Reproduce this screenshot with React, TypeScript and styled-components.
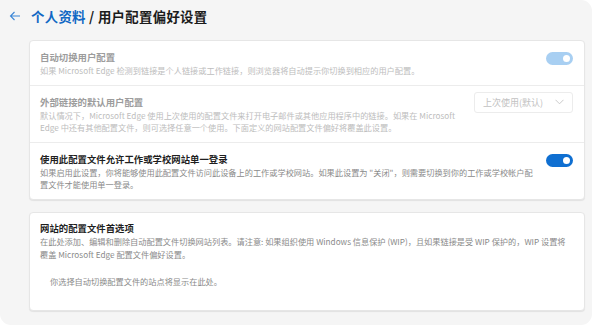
import React from 'react'
import styled, { createGlobalStyle } from 'styled-components'

const GlobalStyle = createGlobalStyle`
  html, body {
    margin: 0;
    padding: 0;
    background: #ffffff;
  }
  body {
    font-family: "Noto Sans CJK SC", "Noto Sans", "Liberation Sans", sans-serif;
    -webkit-font-smoothing: antialiased;
  }
`

const Panel = styled.div`
  width: 592px;
  height: 325px;
  box-sizing: border-box;
  background: #f5f5f5;
  border-radius: 0 11px 11px 11px;
  display: flex;
  flex-direction: column;
  padding: 0 7px 0 29px;
`

const Header = styled.div`
  height: 40px;
  display: flex;
  align-items: center;
  gap: 10px;
  margin-left: -20px;
  padding-bottom: 8px;
  box-sizing: border-box;
`

const BackButton = styled.span`
  display: flex;
  align-items: center;
  color: #3b86d6;
`

const Title = styled.h1`
  margin: 0;
  font-size: 13.4px;
  font-weight: 700;
  color: #1b1b1b;
  letter-spacing: 0.3px;
`

const Crumb = styled.span`
  color: #1168c4;
`

const Card = styled.section<{ $gap?: number }>`
  background: #ffffff;
  border: 1px solid #e6e6e6;
  border-radius: 4px;
  box-shadow: 0 1px 1px rgba(0, 0, 0, 0.08);
  margin-bottom: ${({ $gap }) => $gap ?? 0}px;
`

const Row = styled.div<{ $last?: boolean }>`
  display: flex;
  align-items: flex-start;
  justify-content: space-between;
  padding: 9px 11px 8px 10px;
  border-bottom: ${({ $last }) => ($last ? 'none' : '1px solid #ececec')};
`

const TextBlock = styled.div<{ $width: number }>`
  width: ${({ $width }) => $width}px;
`

const RowTitle = styled.div<{ $disabled?: boolean }>`
  font-size: 9.4px;
  line-height: 14px;
  font-weight: 700;
  color: ${({ $disabled }) => ($disabled ? '#9c9c9c' : '#1f1f1f')};
`

const RowDesc = styled.div<{ $disabled?: boolean }>`
  font-size: 8.2px;
  line-height: 12.6px;
  color: ${({ $disabled }) => ($disabled ? '#bdbdbd' : '#8a8a8a')};
`

const Toggle = styled.div<{ $disabled?: boolean }>`
  width: 27px;
  height: 13px;
  margin-top: 2px;
  border-radius: 7px;
  background: ${({ $disabled }) => ($disabled ? '#a8cff2' : '#0f6fd1')};
  display: flex;
  align-items: center;
  justify-content: flex-end;
  padding-right: 3px;
  box-sizing: border-box;
  &::after {
    content: '';
    width: 7px;
    height: 7px;
    border-radius: 50%;
    background: #ffffff;
  }
`

const Select = styled.div`
  width: 99px;
  height: 21px;
  margin-top: -3px;
  box-sizing: border-box;
  border: 1px solid #ececec;
  border-radius: 3px;
  display: flex;
  align-items: center;
  justify-content: space-between;
  padding: 0 8px 0 8px;
  font-size: 9px;
  color: #c2c2c2;
`

const CardBody = styled.div`
  padding: 8px 11px 0 10px;
  height: 97px;
  box-sizing: border-box;
`

const EmptyNote = styled.div`
  font-size: 8.2px;
  line-height: 13px;
  color: #8a8a8a;
  padding: 15px 0 0 10px;
`

const App = () => {
  return (
    <>
      <GlobalStyle />
      <Panel>
        <Header>
          <BackButton>
            <svg width="12" height="10" viewBox="0 0 12 10" fill="none">
              <path d="M11 5H1.5M5.5 1L1.5 5l4 4" stroke="currentColor" strokeWidth="1.1" />
            </svg>
          </BackButton>
          <Title>
            <Crumb>个人资料</Crumb> / 用户配置偏好设置
          </Title>
        </Header>

        <Card $gap={12}>
          <Row>
            <TextBlock $width={500}>
              <RowTitle $disabled>自动切换用户配置</RowTitle>
              <RowDesc $disabled>
                如果 Microsoft Edge 检测到链接是个人链接或工作链接，则浏览器将自动提示你切换到相应的用户配置。
              </RowDesc>
            </TextBlock>
            <Toggle $disabled />
          </Row>
          <Row>
            <TextBlock $width={425}>
              <RowTitle $disabled>外部链接的默认用户配置</RowTitle>
              <RowDesc $disabled>
                默认情况下，Microsoft Edge 使用上次使用的配置文件来打开电子邮件或其他应用程序中的链接。如果在 Microsoft
                Edge 中还有其他配置文件，则可选择任意一个使用。下面定义的网站配置文件偏好将覆盖此设置。
              </RowDesc>
            </TextBlock>
            <Select>
              上次使用(默认)
              <svg width="9" height="6" viewBox="0 0 9 6" fill="none">
                <path d="M0.5 0.8L4.5 4.8L8.5 0.8" stroke="#c4c4c4" strokeWidth="0.9" />
              </svg>
            </Select>
          </Row>
          <Row $last>
            <TextBlock $width={500}>
              <RowTitle>使用此配置文件允许工作或学校网站单一登录</RowTitle>
              <RowDesc>
                如果启用此设置，你将能够使用此配置文件访问此设备上的工作或学校网站。如果此设置为 "关闭"，则需要切换到你的工作或学校帐户配置文件才能使用单一登录。
              </RowDesc>
            </TextBlock>
            <Toggle />
          </Row>
        </Card>

        <Card>
          <CardBody>
            <RowTitle>网站的配置文件首选项</RowTitle>
            <TextBlock $width={531}>
              <RowDesc>
                在此处添加、编辑和删除自动配置文件切换网站列表。请注意: 如果组织使用 Windows 信息保护 (WIP)，且如果链接是受 WIP 保护的，WIP 设置将覆盖 Microsoft Edge 配置文件偏好设置。
              </RowDesc>
            </TextBlock>
            <EmptyNote>你选择自动切换配置文件的站点将显示在此处。</EmptyNote>
          </CardBody>
        </Card>
      </Panel>
    </>
  )
}

export default App
